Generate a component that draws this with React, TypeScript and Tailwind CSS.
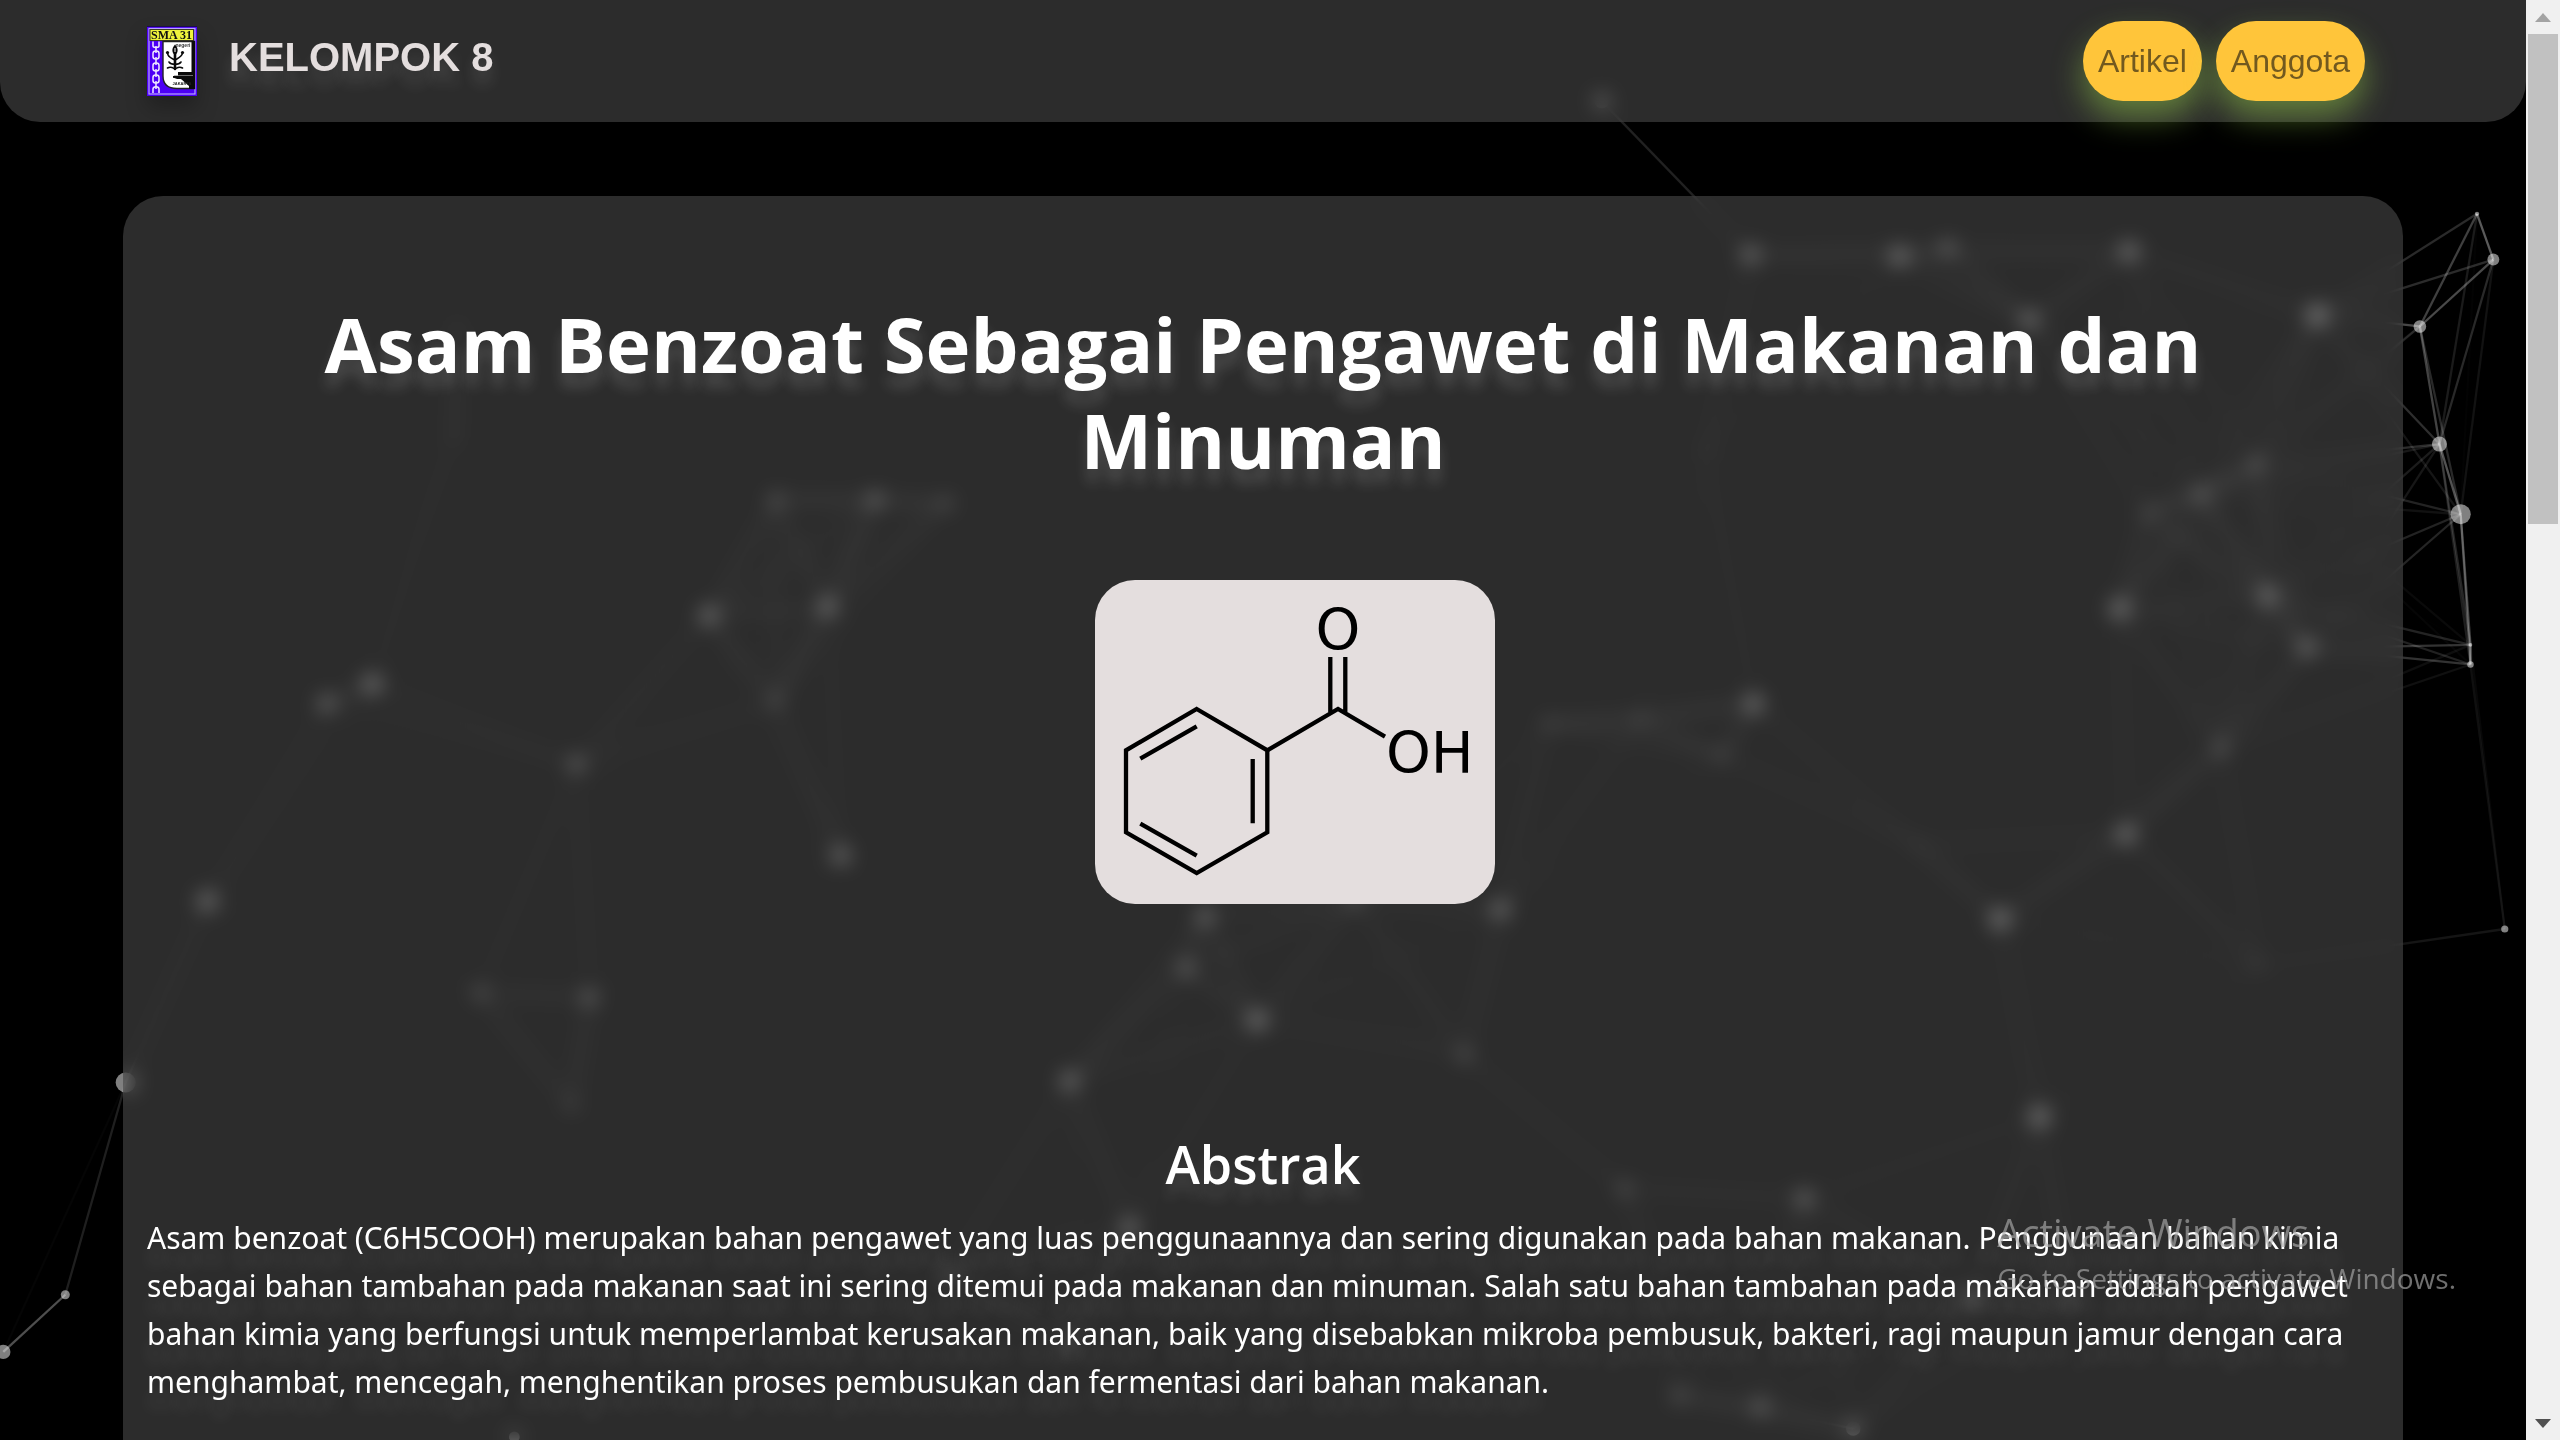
import React from 'react';

type Particle = [x: number, y: number, r: number];

const particles: Particle[] = [
  [981, 62, 4], [1072, 156, 5], [1163, 157, 5.4], [1193, 152, 4], [1304, 154, 5.4], [1243, 196, 5],
  [1419, 193, 6.2], [1517, 131, 1.2], [1527, 159, 3.3], [1482, 200, 3.5], [1494, 272, 4.2],
  [1507, 315, 5.6], [1513, 395, 1], [1513, 407, 1.8], [1534, 569, 2], [1382, 284, 3],
  [1348, 303, 3.4], [1315, 314, 2], [1298, 373, 5.6], [1389, 365, 5], [1413, 397, 4.5],
  [1360, 459, 3], [1302, 511, 5.5], [1225, 563, 6], [1249, 684, 6], [1105, 734, 4.5],
  [995, 728, 3], [1074, 431, 5.4], [1004, 441, 2], [948, 443, 2], [1055, 463, 2], [897, 646, 3],
  [919, 557, 5], [770, 625, 5.5], [726, 593, 4], [738, 561, 4.5], [830, 551, 3], [655, 662, 5],
  [692, 752, 5], [515, 524, 5], [361, 611, 4], [294, 608, 3], [350, 677, 2], [353, 468, 4],
  [475, 430, 2.5], [507, 372, 5], [434, 377, 5], [536, 306, 4], [475, 306, 3], [580, 308, 2.5],
  [228, 419, 5.5], [200, 431, 4.5], [127, 552, 5.5], [77, 663, 5.6], [40, 793, 2.5],
  [2, 828, 4], [280, 200, 1], [278, 268, 1], [580, 780, 3], [655, 823, 3], [1207, 795, 4],
  [1268, 795, 3], [1028, 855, 3], [1078, 862, 4], [1135, 875, 4], [315, 880, 3],
  [1383, 591, 1.5], [1045, 276, 1], [1174, 517, 1],
];

const LINK_DISTANCE = 190;

const links = particles.flatMap(([x1, y1], i) =>
  particles.slice(i + 1).flatMap(([x2, y2]) => {
    const d = Math.hypot(x2 - x1, y2 - y1);
    return d < LINK_DISTANCE ? [{ x1, y1, x2, y2, o: 0.42 * (1 - d / LINK_DISTANCE) }] : [];
  }),
);

function ParticleField() {
  return (
    <svg
      aria-hidden="true"
      className="absolute inset-0 h-full w-full"
      viewBox="0 0 1547 882"
      preserveAspectRatio="xMidYMid slice"
    >
      {particles.map(([x, y, r], i) => (
        <circle key={i} cx={x} cy={y} r={r * 1.1} fill="#fff" fillOpacity="0.5" />
      ))}
      {links.map((l, i) => (
        <line key={i} x1={l.x1} y1={l.y1} x2={l.x2} y2={l.y2} stroke="#fff" strokeOpacity={l.o} strokeWidth="1.4" />
      ))}
    </svg>
  );
}

function SchoolLogo() {
  return (
    <svg
      viewBox="0 0 50 70"
      role="img"
      aria-label="SMA 31 Jakarta"
      className="h-[70px] w-[50px] drop-shadow-[0_12px_10px_rgba(0,0,0,0.25)]"
    >
      <rect width="50" height="70" fill="#4d00f5" />
      <rect width="50" height="1" fill="#1b0a52" />
      <rect x="2" y="2.5" width="46" height="65.5" fill="none" stroke="#b9a6ff" strokeWidth="1.2" />
      <rect x="3" y="3.5" width="43.5" height="11" fill="#eef23c" stroke="#3a3a20" strokeWidth="1" />
      <text x="24.5" y="12.8" textAnchor="middle" fontFamily="Liberation Serif, serif" fontWeight="700" fontSize="12" fill="#111">
        SMA 31
      </text>
      <path d="M16 15.5H47.5V62.5H30C20 62.500 16 57 16 50Z" fill="#fff" stroke="#222" strokeWidth="1.4" />
      <path d="M44.500 15H48V63H42V60L34 53H26V50H31V46H44.500Z" fill="#0a0a0a" />
      <path d="M27 49.500H46" stroke="#999" strokeWidth="0.7" />
      <path d="M19 52C26 50 34 54 39 59L31 61C24 61 19 57 19 52Z" fill="#fff" />
      <text x="36" y="20.500" textAnchor="middle" fontFamily="Liberation Sans, sans-serif" fontWeight="700" fontSize="5" fill="#333">
        negeri
      </text>
      <text x="35" y="58.500" textAnchor="middle" fontFamily="Liberation Sans, sans-serif" fontWeight="700" fontSize="4" fill="#222">
        JAKARTA
      </text>
      <g fill="none" stroke="#0a0a0a" strokeWidth="1.6" strokeLinecap="round">
        <path d="M28 27V43" strokeWidth="2.6" />
        <path d="M20.500 27C21 32 25 32 28 34C31 32 35 31 35.500 27" />
        <path d="M22 36C24 39 32 39 34 36" />
        <path d="M20.500 42C24 40 26 42 28 43C30 42 32 40 35.500 42" />
      </g>
      <circle cx="20.500" cy="26.500" r="1.600" fill="#0a0a0a" />
      <circle cx="35.500" cy="26.500" r="1.600" fill="#0a0a0a" />
      <path d="M28 18.500C32 23 31 27 28 29C25 27 24 23 28 18.500Z" fill="#0a0a0a" />
      <path d="M28 22V26" stroke="#fff" strokeWidth="1" />
      <g fill="none" stroke="#efe9ff" strokeWidth="1.5">
        <path d="M6 15.500V20C6 22 12 22 12 20V15.500" />
        <rect x="6" y="25" width="6" height="8" rx="2.500" />
        <rect x="6" y="37" width="6" height="8" rx="2.500" />
        <rect x="6" y="49" width="6" height="8" rx="2.500" />
        <path d="M6 67V63C6 60 12 60 12 63V67" />
        <path d="M9 20V27M9 31V39M9 43V51M9 55V63" />
      </g>
    </svg>
  );
}

function BenzoicAcid() {
  return (
    <svg viewBox="0 0 400 324" role="img" aria-label="Struktur asam benzoat" className="w-full">
      <g fill="none" stroke="#000" strokeWidth="4.300">
        <path d="M101.700 129L172.300 170.300V252.300L101.700 293L31 252.300V170.300Z" />
        <path d="M101.700 146.300L45.300 178.700M157.700 179V243.300M45.300 243.700L101.700 275.700" />
        <path d="M172.300 170.300L243 129L290 156.700M235.300 77V133M250.300 77V133" />
      </g>
      <text x="243" y="70" textAnchor="middle" fontFamily="DejaVu Sans, sans-serif" fontSize="57">O</text>
      <text x="291" y="192.500" fontFamily="DejaVu Sans, sans-serif" fontSize="57">OH</text>
    </svg>
  );
}

function NavPill({ href, children }: { href: string; children: React.ReactNode }) {
  return (
    <a
      href={href}
      className="mr-3.5 flex h-20 items-center rounded-[40px] bg-[#ffc53a] px-[15px] font-['Liberation_Sans',sans-serif] text-[32px] text-[#72591f] shadow-[0_16px_32px_rgba(173,240,80,0.42)]"
    >
      {children}
    </a>
  );
}

function Scrollbar() {
  return (
    <div aria-hidden="true" className="flex w-[34px] shrink-0 flex-col items-center bg-[#f0f0f0]">
      <div className="flex h-[34px] items-center">
        <svg viewBox="0 0 16 9" className="w-4">
          <path d="M8 0L16 9H0Z" fill="#a3a3a3" />
        </svg>
      </div>
      <div className="w-[30px] flex-[490] bg-[#c1c1c1]" />
      <div className="flex-[882]" />
      <div className="flex h-[34px] items-center">
        <svg viewBox="0 0 16 9" className="w-4">
          <path d="M0 0H16L8 9Z" fill="#505050" />
        </svg>
      </div>
    </div>
  );
}

export default function App() {
  return (
    <div className="flex h-screen overflow-hidden bg-black font-['Open_Sans','Noto_Sans',sans-serif] text-white">
      <div className="relative min-w-0 flex-1 overflow-hidden">
        <ParticleField />
        <header className="relative rounded-b-[40px] bg-[#585858]/50 backdrop-blur-[10px]">
          <nav className="mx-auto flex h-[122px] max-w-[2280px] items-center px-6">
            <a href="#beranda" className="flex items-center gap-8">
              <SchoolLogo />
              <span className="pb-2 font-['Liberation_Sans',sans-serif] text-[40px] font-bold leading-[48px] text-[#e4dede] [text-shadow:0_14px_14px_rgba(255,255,255,0.12)]">
                KELOMPOK 8
              </span>
            </a>
            <div className="ml-auto flex items-center">
              <NavPill href="#artikel">Artikel</NavPill>
              <NavPill href="#anggota">Anggota</NavPill>
            </div>
          </nav>
        </header>

        <main
          id="artikel"
          className="relative mx-auto mt-[74px] max-w-[2280px] rounded-[40px] bg-[#585858]/50 px-6 pb-24 pt-[100px] backdrop-blur-[10px]"
        >
          <h1 className="mx-auto max-w-[2000px] text-center text-[76px] font-bold leading-[96px] [text-shadow:0_14px_14px_rgba(255,255,255,0.15)]">
            Asam Benzoat Sebagai Pengawet di Makanan dan Minuman
          </h1>
          <figure className="ml-16 mt-[92px] flex justify-center">
            <div className="w-[400px] overflow-hidden rounded-[40px] bg-[#e4dede]">
              <BenzoicAcid />
            </div>
          </figure>
          <section className="mt-[226px]">
            <h2 className="text-center text-[52px] font-semibold leading-[68px] [text-shadow:0_14px_14px_rgba(255,255,255,0.12)]">
              Abstrak
            </h2>
            <p className="mt-4 font-['Noto_Sans',sans-serif] text-[30px] leading-[48px] [text-shadow:0_18px_16px_rgba(255,255,255,0.12)]">
              Asam benzoat (C6H5COOH) merupakan bahan pengawet yang luas penggunaannya dan sering digunakan pada bahan
              makanan. Penggunaan bahan kimia sebagai bahan tambahan pada makanan saat ini sering ditemui pada makanan
              dan minuman. Salah satu bahan tambahan pada makanan adalah pengawet bahan kimia yang berfungsi untuk
              memperlambat kerusakan makanan, baik yang disebabkan mikroba pembusuk, bakteri, ragi maupun jamur dengan
              cara menghambat, mencegah, menghentikan proses pembusukan dan fermentasi dari bahan makanan.
            </p>
          </section>
        </main>
      </div>
      <Scrollbar />
      <div className="pointer-events-none fixed bottom-[142px] right-[104px] text-[#aaaaaa]/65">
        <p className="text-[38px] leading-[52px]">Activate Windows</p>
        <p className="text-[28px] leading-10">Go to Settings to activate Windows.</p>
      </div>
    </div>
  );
}
